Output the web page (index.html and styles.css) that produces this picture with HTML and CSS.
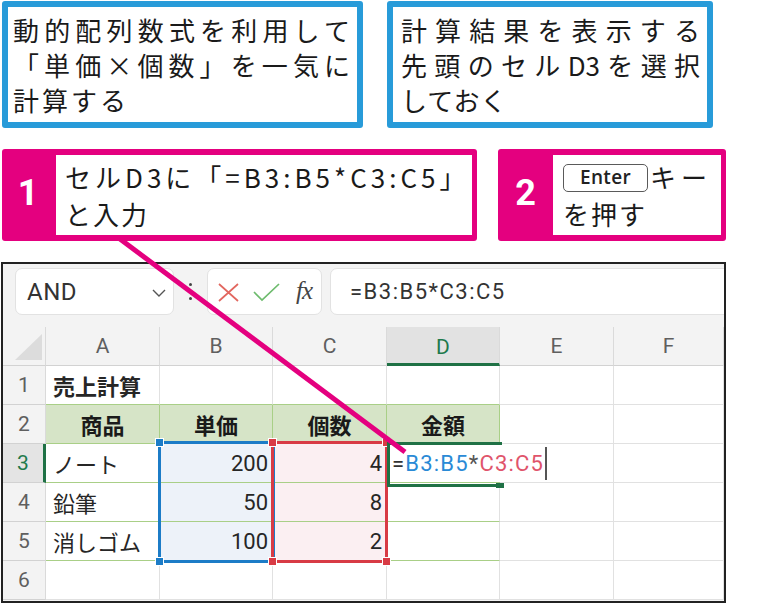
FILE: index.html
```html
<!DOCTYPE html>
<html lang="ja">
<head>
<meta charset="utf-8">
<title>動的配列数式</title>
<link rel="stylesheet" href="styles.css">
</head>
<body>
<div class="page">
  <div class="notes">
    <div class="note note-1">
      <div class="jl">動的配列数式を利用して</div>
      <div class="jl">「単価×個数」を一気に</div>
      <div class="ll">計算する</div>
    </div>
    <div class="note note-2">
      <div class="jl">計算結果を表示する</div>
      <div class="jl">先頭のセルD3を選択</div>
      <div class="ll">しておく</div>
    </div>
  </div>

  <div class="steps">
    <div class="step step-1">
      <div class="num">1</div>
      <div class="body">
        <div class="l1">セルD3に「=B3:B5*C3:C5」</div>
        <div>と入力</div>
      </div>
    </div>
    <div class="step step-2">
      <div class="num">2</div>
      <div class="body">
        <div class="l1"><span class="key">Enter</span>キー</div>
        <div>を押す</div>
      </div>
    </div>
  </div>

  <div class="excel">
    <div class="toolbar">
      <div class="namebox">
        <span>AND</span>
        <svg class="chev" width="14" height="8" viewBox="0 0 14 8"><polyline points="1,1 7,7 13,1" fill="none" stroke="#555" stroke-width="1.4"/></svg>
      </div>
      <div class="dots"><i></i><i></i><i></i></div>
      <div class="fxbox">
        <svg width="21" height="19" viewBox="0 0 21 19"><path d="M1 1 L20 18 M20 1 L1 18" stroke="#e2675f" stroke-width="1.7" fill="none"/></svg>
        <svg width="27" height="19" viewBox="0 0 27 19"><polyline points="1,9 9,17 26,1" fill="none" stroke="#6dbb6d" stroke-width="1.7"/></svg>
        <span class="fx">fx</span>
      </div>
      <div class="formula">=B3:B5*C3:C5</div>
    </div>

    <div class="grid">
      <div class="c corner"><svg width="27" height="26" viewBox="0 0 27 26"><polygon points="27,0 27,26 0,26" fill="#dcdcdc"/></svg></div>
      <div class="c ch">A</div>
      <div class="c ch">B</div>
      <div class="c ch">C</div>
      <div class="c ch ch-sel">D</div>
      <div class="c ch">E</div>
      <div class="c ch">F</div>

      <div class="c rh">1</div>
      <div class="c gb title">売上計算</div>
      <div class="c gb"></div>
      <div class="c gb"></div>
      <div class="c gb"></div>
      <div class="c"></div>
      <div class="c"></div>

      <div class="c rh">2</div>
      <div class="c hd">商品</div>
      <div class="c hd">単価</div>
      <div class="c hd">個数</div>
      <div class="c hd">金額</div>
      <div class="c"></div>
      <div class="c"></div>

      <div class="c rh rh-sel">3</div>
      <div class="c gb">ノート</div>
      <div class="c gb n selb">200</div>
      <div class="c gb n selc">4</div>
      <div class="c gb d3"><span class="eq">=</span><span class="rb">B3:B5</span><span class="op">*</span><span class="rc">C3:C5</span><span class="caret"></span></div>
      <div class="c"></div>
      <div class="c"></div>

      <div class="c rh">4</div>
      <div class="c gb">鉛筆</div>
      <div class="c gb n selb">50</div>
      <div class="c gb n selc">8</div>
      <div class="c gb"></div>
      <div class="c"></div>
      <div class="c"></div>

      <div class="c rh">5</div>
      <div class="c gb">消しゴム</div>
      <div class="c gb n selb">100</div>
      <div class="c gb n selc">2</div>
      <div class="c gb"></div>
      <div class="c"></div>
      <div class="c"></div>

      <div class="c rh">6</div>
      <div class="c"></div>
      <div class="c"></div>
      <div class="c"></div>
      <div class="c"></div>
      <div class="c"></div>
      <div class="c"></div>

      <div class="rng rng-b"><i class="h tl"></i><i class="h bl"></i></div>
      <div class="rng rng-c"><i class="h tl"></i><i class="h tr"></i><i class="h bl"></i><i class="h br"></i></div>
      <div class="active"><i class="fill"></i></div>
    </div>
  </div>

  <svg class="leader" width="783" height="603" viewBox="0 0 783 603"><line x1="120" y1="239" x2="405" y2="452" stroke="#e4007f" stroke-width="5"/></svg>
</div>
</body>
</html>
```

FILE: styles.css
```css
* { box-sizing: border-box; }
html, body { margin: 0; padding: 0; background: #fff; }
body { font-family: "Noto Sans CJK JP", sans-serif; color: #1a1a1a; }

.page { position: relative; width: 783px; height: 603px; overflow: hidden; }

/* blue notes */
.notes { display: flex; gap: 24px; padding: 1px 0 0 2px; }
.note {
  flex-shrink: 0;
  height: 127px;
  border: 6px solid #289bd9;
  border-radius: 3px;
  font-size: 26px;
  line-height: 35px;
}
.note-1 { width: 361px; padding: 5px 7px 0 5px; }
.note-2 { width: 326px; padding: 5px 7px 0 8px; }
.jl { text-align: justify; text-align-last: justify; }
.note-1 .ll { letter-spacing: 3px; }
.note-2 .ll { letter-spacing: 1px; }

/* pink steps */
.steps { display: flex; gap: 21px; padding-left: 2px; margin-top: 21px; }
.step {
  flex-shrink: 0;
  display: flex;
  height: 92px;
  background: #e4007f;
  border-radius: 3px;
  padding: 6px 5px 6px 0;
}
.step-1 { width: 475px; }
.step-2 { width: 228px; }
.num {
  flex-shrink: 0;
  width: 54px;
  display: flex;
  align-items: center;
  justify-content: center;
  padding: 0 2px 4px 0;
  color: #fff;
  font: 700 36px Roboto, "Liberation Sans", sans-serif;
}
.step-2 .num { width: 55px; padding-right: 0; }
.step .body {
  flex: 1 1 auto;
  min-width: 0;
  background: #fff;
  padding: 3px 4px 0 9px;
  font-size: 26px;
  line-height: 37px;
  letter-spacing: 2px;
  white-space: nowrap;
}
.step-2 .body { padding-left: 10px; }
.step-1 .l1 { letter-spacing: 4px; }
.step-2 .l1 { letter-spacing: 5px; }
.key {
  display: inline-block;
  vertical-align: top;
  margin: 6px 2px 0 0;
  width: 85px;
  height: 28px;
  border: 1.5px solid #5a5a5a;
  border-radius: 5px;
  text-align: center;
  letter-spacing: 0.3px;
  font: 600 19px/25px "Open Sans", sans-serif;
  color: #222;
}

/* excel */
.excel {
  margin: 21px 0 0 1px;
  width: 725px;
  height: 341px;
  border: 2px solid #222;
  background: #f3f3f3;
  overflow: hidden;
  font-family: Roboto, "Noto Sans CJK JP", sans-serif;
}
.toolbar { display: flex; align-items: flex-start; height: 63px; padding: 4px 0 0 12px; }
.namebox {
  flex-shrink: 0;
  width: 159px;
  height: 47px;
  display: flex;
  align-items: center;
  justify-content: space-between;
  padding: 0 7px 0 11px;
  background: #fff;
  border: 1px solid #e2e2e2;
  border-radius: 7px;
  font-size: 24px;
  letter-spacing: 0.5px;
  color: #333;
}
.chev { margin-top: 2px; }
.dots {
  flex-shrink: 0;
  width: 33px;
  height: 47px;
  display: flex;
  flex-direction: column;
  align-items: center;
  justify-content: center;
  gap: 4px;
}
.dots i { width: 3px; height: 3px; border-radius: 50%; background: #444; }
.fxbox {
  flex-shrink: 0;
  width: 115px;
  height: 47px;
  display: flex;
  align-items: center;
  padding: 2px 0 0 10px;
  background: #fff;
  border: 1px solid #e2e2e2;
  border-radius: 7px;
}
.fxbox svg:nth-child(2) { margin-left: 14px; }
.fx {
  margin: -4px 0 0 16px;
  font: italic 25px "Liberation Serif", serif;
  color: #444;
  letter-spacing: -1px;
}
.formula {
  flex: 1;
  height: 47px;
  margin: 0 -8px 0 8px;
  display: flex;
  align-items: center;
  padding-left: 19px;
  background: #fff;
  border: 1px solid #e2e2e2;
  border-radius: 7px;
  font-size: 22px;
  letter-spacing: 1.5px;
  color: #333;
}

.grid {
  position: relative;
  display: grid;
  grid-template-columns: 43px 114px 113px 114px 113px 114px 1fr;
  grid-template-rows: repeat(7, 39px);
  background: #fff;
}
.c {
  display: flex;
  align-items: center;
  padding: 0 4px 0 7px;
  border-right: 1px solid #e1e1e1;
  border-bottom: 1px solid #e1e1e1;
  font-size: 22px;
  color: #262626;
  white-space: nowrap;
}
.ch, .rh, .corner {
  background: #f3f3f3;
  justify-content: center;
  padding: 0;
  color: #5f5f5f;
  font-size: 21px;
  border-right-color: #dadada;
  border-bottom-color: #d2d2d2;
}
.corner { align-items: flex-end; justify-content: flex-end; padding: 0 3px 5px 0; }
.ch-sel { background: #e2e2e2; color: #1f7a4c; border-bottom: 3px solid #1f7145; padding-top: 3px; }
.rh-sel { background: #e4e4e4; color: #1f7a4c; border-right: 3px solid #1f7145; }

.gb { border-bottom-color: #a9cf87; }
.title { font-weight: 700; }
.hd {
  justify-content: center;
  font-weight: 700;
  background: #d6e4c7;
  border-right-color: #a9cf87;
  border-bottom-color: #a9cf87;
  padding: 0;
  color: #1a1a1a;
}
.n { justify-content: flex-end; }
.selb { background: #edf2f9; }
.selc { background: #fbeff2; }
.d3 { padding-left: 5px; border-right: none; overflow: visible; font-size: 22px; letter-spacing: 1.2px; }
.d3 span { flex-shrink: 0; }
.d3 .eq { color: #333; }
.d3 .rb { color: #2a8ad6; }
.d3 .op { color: #555; }
.d3 .rc { color: #e0546b; }
.d3 .caret { display: block; width: 2px; height: 33px; background: #555; margin-left: 1px; }

/* range overlays */
.rng { position: absolute; pointer-events: none; z-index: 2; border: 3px solid; }
.rng-b { grid-column: 3 / 4; grid-row: 4 / 7; inset: -3px -2px -2px -2px; border-color: #1c7cc7; }
.rng-c { grid-column: 4 / 5; grid-row: 4 / 7; inset: -3px -1px -2px -2px; border-color: #d83b45; }
.h {
  position: absolute;
  width: 9px;
  height: 9px;
  border: 1px solid #fff;
}
.rng-b .h { background: #1c7cc7; }
.rng-c .h { background: #d83b45; }
.h.tl { left: -6px; top: -6px; }
.h.tr { right: -6px; top: -6px; }
.h.bl { left: -6px; bottom: -6px; }
.h.br { right: -6px; bottom: -6px; }

.active {
  position: absolute;
  grid-column: 5 / 6;
  grid-row: 4 / 5;
  inset: -2px -2px -4px 0;
  border: 3px solid #1f7145;
  border-right: none;
  z-index: 3;
  pointer-events: none;
}
.fill {
  position: absolute;
  right: -2px;
  bottom: -4px;
  width: 8px;
  height: 5px;
  background: #1f7145;
}

.leader { position: absolute; left: 0; top: 0; z-index: 10; pointer-events: none; }
```
